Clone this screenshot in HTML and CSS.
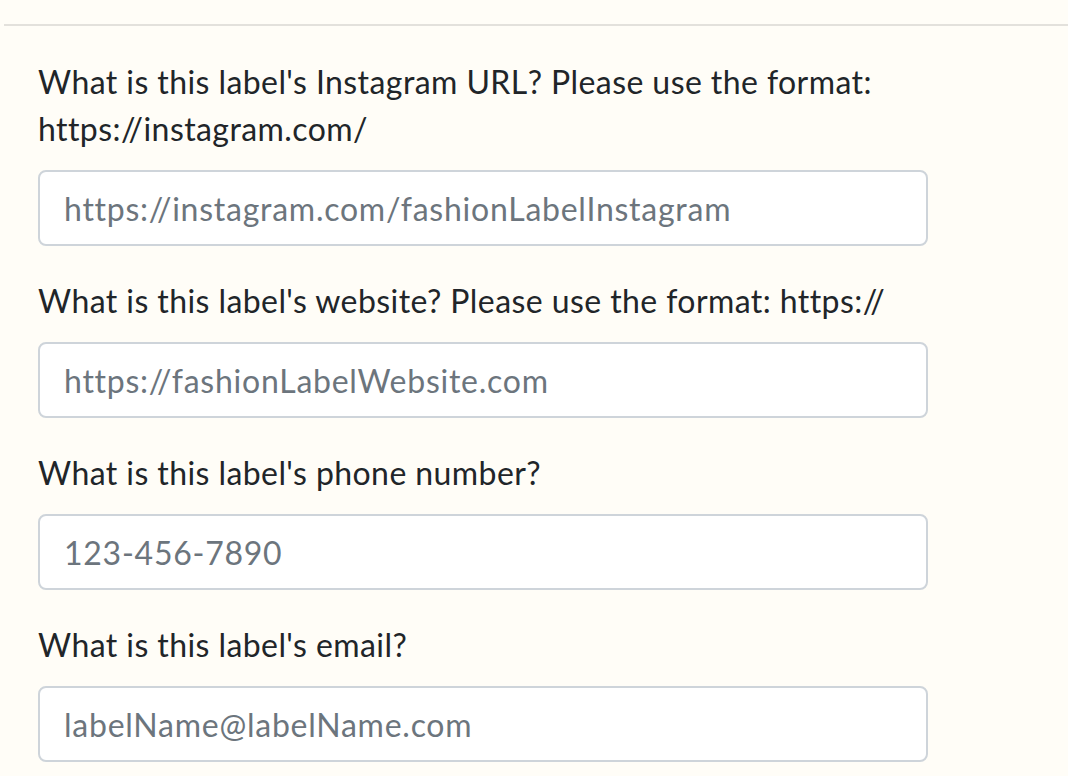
FILE: index.html
```html
<!DOCTYPE html>
<html>
<head>
<meta charset="utf-8">
<link rel="stylesheet" href="styles.css">
</head>
<body>
<hr class="divider">
<form class="form">
  <div class="group">
    <label class="label">What is this label's Instagram URL? Please use the format: https://instagram.com/</label>
    <input class="control" type="text" placeholder="https://instagram.com/fashionLabelInstagram">
  </div>
  <div class="group">
    <label class="label">What is this label's website? Please use the format: https://</label>
    <input class="control" type="text" placeholder="https://fashionLabelWebsite.com">
  </div>
  <div class="group">
    <label class="label">What is this label's phone number?</label>
    <input class="control" type="text" placeholder="123-456-7890">
  </div>
  <div class="group">
    <label class="label">What is this label's email?</label>
    <input class="control" type="text" placeholder="labelName@labelName.com">
  </div>
</form>
</body>
</html>
```
FILE: styles.css
```css
html, body {
  margin: 0;
  padding: 0;
}
body {
  background: #fffdf7;
  font-family: Lato, "Noto Sans", sans-serif;
  font-size: 32px;
  line-height: 1.5;
  color: #212529;
  overflow: hidden;
  height: 776px;
}
.divider {
  margin: 24px 0 0 4px;
  border: 0;
  border-top: 2px solid #e3e1dc;
  height: 0;
}
.form {
  padding: 32px 0 0 38px;
  width: 890px;
}
.group {
  display: flex;
  flex-direction: column;
  margin-bottom: 32px;
}
.label {
  margin-bottom: 16px;
  letter-spacing: 0.42px;
  line-height: 46px;
  padding-bottom: 2px;
}
.group:first-child .label {
  line-height: 47px;
}
.control {
  box-sizing: border-box;
  height: 76px;
  width: 890px;
  padding: 12px 24px;
  font-family: inherit;
  font-size: 32px;
  line-height: 48px;
  letter-spacing: 0.75px;
  color: #495057;
  background: #fff;
  border: 2px solid #ced4da;
  border-radius: 8px;
  outline: none;
}
.control::placeholder {
  color: #6c757d;
  opacity: 1;
}
```
